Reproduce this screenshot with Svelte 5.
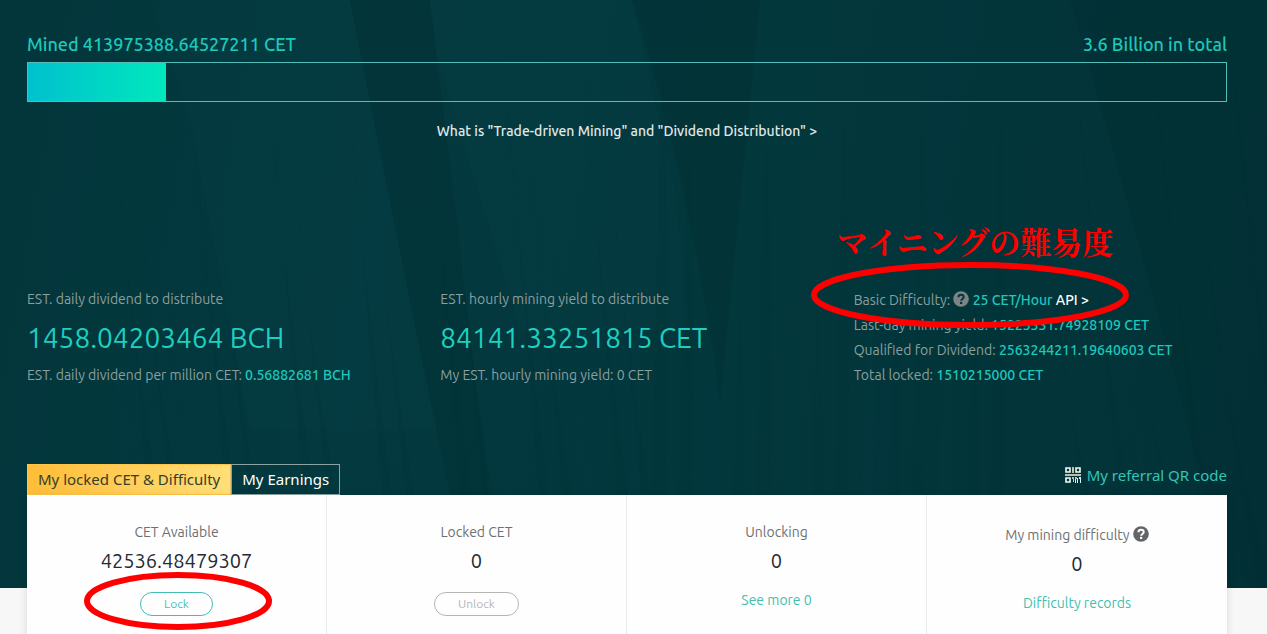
<script>
  const mined = '413975388.64527211'
  const progress = 11.5

  const network = [
    { label: 'Last-day mining yield:', value: '15223331.74928109 CET' },
    { label: 'Qualified for Dividend:', value: '2563244211.19640603 CET' },
    { label: 'Total locked:', value: '1510215000 CET' },
  ]

  // faint grass blades behind the stats
  const blades = []
  for (let i = 0; i < 46; i++) {
    const x = 90 + i * 26
    const top = 60 + ((i * 83) % 260)
    const lean = x < 620 ? 40 : x > 1000 ? 50 : -12
    blades.push({
      d: `M${x} ${top} Q${x + lean / 3} ${top + 150} ${x + lean} 588 L${x + lean + 14} 588 Q${x + 8} ${top + 130} ${x} ${top}Z`,
      dark: i % 3 !== 0,
    })
  }
</script>

{#snippet help()}
  <svg class="help" viewBox="0 0 16 16" aria-hidden="true">
    <circle cx="8" cy="8" r="7.8" />
    <path d="M5.4 6.2C5.5 4.5 6.5 3.7 8 3.7c1.600 0 2.700.9 2.700 2.300 0 2-2.500 1.900-2.500 3.700" />
    <rect x="7" y="10.900" width="2.200" height="2.100" />
  </svg>
{/snippet}

<main>
  <section class="hero">
    <svg class="backdrop" viewBox="0 0 1267 588" preserveAspectRatio="none" aria-hidden="true">
      <path class="glow" d="M150 0H350L410 230L440 430H250L190 120Z" />
      <path class="glow" d="M420 0H632L675 190L690 330H520Z" />
      <path class="shade" d="M350 0H430L500 588H470Q400 260 350 0Z" />
      <path class="shade" d="M632 0H760L720 400Q690 180 632 0Z" />
      <path class="shade" d="M1070 0H1267V588H1230Q1140 240 1070 0Z" />
      {#each blades as blade}
        <path class={blade.dark ? 'blade' : 'blade light'} d={blade.d} />
      {/each}
    </svg>

    <div class="wrap">
      <div class="totals">
        <span>Mined {mined} CET</span>
        <span>3.6 Billion in total</span>
      </div>
      <div class="bar" role="progressbar" aria-label="Mined" aria-valuenow={progress}>
        <div class="fill" style="width: {progress}%"></div>
      </div>
      <a class="about" href="#about">What is "Trade-driven Mining" and "Dividend Distribution" &gt;</a>

      <div class="stats">
        <div>
          <p>EST. daily dividend to distribute</p>
          <p class="big">1458.04203464 BCH</p>
          <p>EST. daily dividend per million CET: <b>0.56882681 BCH</b></p>
        </div>
        <div>
          <p>EST. hourly mining yield to distribute</p>
          <p class="big">84141.33251815 CET</p>
          <p>My EST. hourly mining yield: 0 CET</p>
        </div>
        <div class="network">
          <p>
            Basic Difficulty: {@render help()} <b>25 CET/Hour</b>
            <a href="#api">API &gt;</a>
          </p>
          {#each network as row}
            <p>{row.label} <b>{row.value}</b></p>
          {/each}
          <span class="note">マイニングの難易度</span>
          <svg class="ring wide" viewBox="0 0 320 68" aria-hidden="true">
            <ellipse cx="160" cy="34" rx="156" ry="30" />
          </svg>
        </div>
      </div>

      <div class="tabs">
        <button class="tab active">My locked CET &amp; Difficulty</button>
        <button class="tab">My Earnings</button>
        <a class="referral" href="#referral">
          <svg viewBox="0 0 16 16" aria-hidden="true">
            <path d="M1 1h4v4H1zM11 1h4v4h-4zM1 11h4v4H1z" fill="none" stroke="#f4fbf7" stroke-width="1.600" />
            <path d="M7 0h2v2H7zM7 4h2v2H7zM0 7h16v2H0zM7 10h2v2H7zM10 10h2v2h-2z" fill="#b9c0ae" />
            <path d="M7 2h2v2H7zM8 12h1v3H8z" fill="#d9cf86" />
            <path d="M10 12h1v4h-1zM12 11h1v5h-1zM14 10h2v6h-1v-4h-1z" fill="#d8f1ec" />
          </svg>
          My referral QR code
        </a>
      </div>
    </div>
  </section>

  <section class="wrap panel">
    <div class="cell">
      <p>CET Available</p>
      <p class="amount">42536.48479307</p>
      <div class="action">
        <button class="pill">Lock</button>
        <svg class="ring lock" viewBox="0 0 188 58" aria-hidden="true">
          <ellipse cx="94" cy="29" rx="91" ry="26" />
        </svg>
      </div>
    </div>
    <div class="cell">
      <p>Locked CET</p>
      <p class="amount">0</p>
      <div class="action"><button class="pill" disabled>Unlock</button></div>
    </div>
    <div class="cell">
      <p>Unlocking</p>
      <p class="amount">0</p>
      <a href="#unlocking">See more 0</a>
    </div>
    <div class="cell">
      <p class="with-help">My mining difficulty {@render help()}</p>
      <p class="amount">0</p>
      <a href="#records">Difficulty records</a>
    </div>
  </section>
</main>

<style>
  :global(body) {
    background: #f7f7f7;
  }

  main {
    font-family: Ubuntu, 'Noto Sans', sans-serif;
    font-size: 14px;
    overflow: hidden;
  }

  p {
    margin: 0;
  }

  a {
    text-decoration: none;
  }

  .wrap {
    margin: 0 40px 0 27px;
  }

  .hero {
    position: relative;
    padding: 32px 0 93px;
    background: linear-gradient(100deg, #02363b, #03393f 30%, #02373c 60%, #023238);
  }

  .backdrop {
    position: absolute;
    inset: 0;
    width: 100%;
    height: 100%;
  }
  .glow {
    fill: #064046;
    opacity: 0.3;
  }
  .shade {
    fill: #012b30;
    opacity: 0.3;
  }
  .blade {
    fill: #01292d;
    opacity: 0.09;
  }
  .light {
    fill: #0b474a;
  }

  .hero .wrap {
    position: relative;
  }

  .totals {
    display: flex;
    justify-content: space-between;
    color: #1ec8bb;
    font-size: 18px;
    font-weight: 500;
    line-height: 24px;
    margin-bottom: 6px;
  }

  .bar {
    height: 38px;
    border: 1px solid #53bdb9;
  }
  .fill {
    height: 100%;
    background: linear-gradient(90deg, #00c1ce, #00e8bd);
  }

  .about {
    display: block;
    margin: 19px 0 146px;
    color: #e0e9e9;
    font-weight: 500;
    line-height: 20px;
    text-align: center;
  }

  .stats {
    display: grid;
    grid-template-columns: repeat(3, 1fr);
    column-gap: 40px;
    color: #8c9f9f;
    line-height: 25px;
    white-space: nowrap;
  }
  .stats b {
    color: #1ec8bb;
    font-weight: 500;
  }
  .stats a {
    color: #fff;
    font-weight: 500;
  }
  .stats .big {
    margin: 8px 0;
    color: #1fcfc0;
    font-size: 28px;
    line-height: 35px;
  }
  .network {
    position: relative;
    padding-top: 1px;
  }

  .help {
    width: 16px;
    height: 16px;
    vertical-align: -2px;
  }
  .help circle {
    fill: #7d8484;
  }
  .help path {
    fill: none;
    stroke: #06353a;
    stroke-width: 2;
  }
  .help rect {
    fill: #06353a;
  }

  .note {
    position: absolute;
    left: -17px;
    top: -66px;
    color: #f00;
    font-family: 'Noto Serif CJK JP', 'Noto Sans CJK JP', serif;
    font-size: 31px;
    font-weight: 700;
    line-height: 40px;
  }

  .ring {
    position: absolute;
    pointer-events: none;
    overflow: visible;
  }
  .ring ellipse {
    fill: none;
    stroke: #f00;
    stroke-width: 6;
  }
  .wide {
    left: -44px;
    top: -26px;
    width: 320px;
    height: 68px;
  }
  .lock {
    left: 50%;
    top: 50%;
    width: 188px;
    height: 58px;
    margin: -32px 0 0 -93px;
  }

  .tabs {
    display: flex;
    align-items: stretch;
    height: 31px;
    margin-top: 76px;
    font-family: 'Noto Sans', Verdana, sans-serif;
    font-size: 15px;
  }
  .tab {
    padding: 0 10px 2px;
    border: 1px solid #8ba3a3;
    background: none;
    color: #fff;
    font: inherit;
  }
  .active {
    border-color: #ffc547;
    border-right-color: #d9c27c;
    background: linear-gradient(90deg, #ffbd38, #ffdf78);
    color: #33402c;
  }
  .referral {
    display: flex;
    align-items: center;
    gap: 6px;
    height: 22px;
    margin-left: auto;
    color: #35c4b6;
  }
  .referral svg {
    width: 16px;
    height: 16px;
  }

  .panel {
    position: relative;
    display: grid;
    grid-template-columns: repeat(4, 1fr);
    margin-top: -93px;
    background: #fefefe;
    box-shadow: 0 2px 8px rgba(0, 0, 0, 0.12);
  }
  .cell {
    padding: 25px 0 20px;
    border-right: 1px solid #e8ebeb;
    color: #6d7073;
    line-height: 24px;
    text-align: center;
  }
  .cell:last-child {
    border-right: 0;
  }
  .cell a {
    display: block;
    margin-top: 13px;
    color: #42bfb2;
  }
  .amount {
    margin-top: 3px;
    color: #222a33;
    font-size: 20px;
    line-height: 28px;
  }
  .with-help {
    padding-top: 3px;
  }
  .with-help .help circle {
    fill: #626668;
  }
  .with-help .help path {
    stroke: #fff;
  }
  .with-help .help rect {
    fill: #fff;
  }

  .action {
    position: relative;
    display: flex;
    justify-content: center;
    margin-top: 17px;
  }
  .pill {
    height: 24px;
    padding: 0 23px;
    border: 1px solid #42bfb2;
    border-radius: 12px;
    background: none;
    color: #42bfb2;
    font: inherit;
    font-size: 12px;
    line-height: 20px;
  }
  .pill:disabled {
    border-color: #b5b5b5;
    color: #b5b5b5;
  }
</style>
